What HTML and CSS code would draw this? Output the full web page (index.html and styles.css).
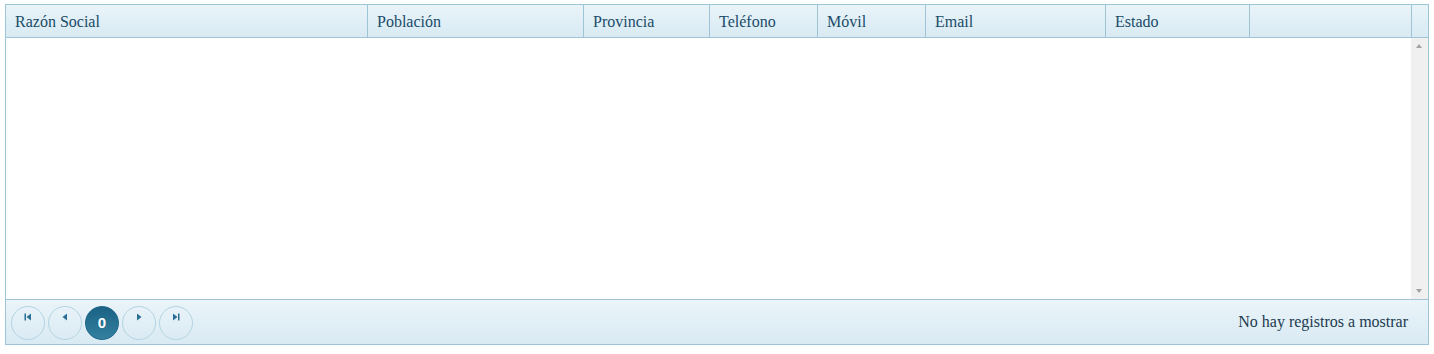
FILE: index.html
```html
<!DOCTYPE html>
<html lang="es">

<head>
    <meta charset="UTF-8">
    <meta name="viewport" content="width=device-width, initial-scale=1.0">
    <title>Clientes</title>
    <link rel="stylesheet" href="styles.css">
</head>

<body>
    <!-- Grid -->
    <div class="grid">
        <div class="grid-header">
            <div class="col col-razon">Razón Social</div>
            <div class="col col-poblacion">Población</div>
            <div class="col col-provincia">Provincia</div>
            <div class="col col-telefono">Teléfono</div>
            <div class="col col-movil">Móvil</div>
            <div class="col col-email">Email</div>
            <div class="col col-estado">Estado</div>
            <div class="col col-extra"></div>
            <div class="col col-scroll"></div>
        </div>

        <div class="grid-body">
            <div class="grid-content"></div>
            <div class="scrollbar">
                <span class="arrow arrow-up"></span>
                <span class="arrow arrow-down"></span>
            </div>
        </div>

        <!-- Pager -->
        <div class="grid-pager">
            <div class="pager-buttons">
                <button class="pager-btn" title="Primera">
                    <svg width="8" height="8" viewBox="0 0 8 8"><rect x="0.5" y="0.5" width="1.5" height="7" fill="#2a6f93"/><path d="M7 0.5 L2.5 4 L7 7.5 Z" fill="#2a6f93"/></svg>
                </button>
                <button class="pager-btn" title="Anterior">
                    <svg width="8" height="8" viewBox="0 0 8 8"><path d="M6 0.5 L1.5 4 L6 7.5 Z" fill="#2a6f93"/></svg>
                </button>
                <button class="pager-btn active">0</button>
                <button class="pager-btn" title="Siguiente">
                    <svg width="8" height="8" viewBox="0 0 8 8"><path d="M2 0.5 L6.5 4 L2 7.5 Z" fill="#2a6f93"/></svg>
                </button>
                <button class="pager-btn" title="Última">
                    <svg width="8" height="8" viewBox="0 0 8 8"><path d="M1 0.5 L5.5 4 L1 7.5 Z" fill="#2a6f93"/><rect x="6" y="0.5" width="1.5" height="7" fill="#2a6f93"/></svg>
                </button>
            </div>
            <div class="pager-info">No hay registros a mostrar</div>
        </div>
    </div>
</body>

</html>
```

FILE: styles.css
```css
/* General Styles */
body {
    margin: 0;
    padding: 4px 0 0 5px;
    font-family: "Liberation Serif", "Times New Roman", serif;
    background-color: #ffffff;
    color: #1a4b68;
}

.grid {
    width: 1424px;
    box-sizing: border-box;
    border: 1px solid #9dc5d6;
}

/* Header */
.grid-header {
    display: flex;
    height: 32px;
    border-bottom: 1px solid #9dc5d6;
    background: linear-gradient(to bottom, #e9f4f9, #d8eaf3);
}

.col {
    box-sizing: border-box;
    padding: 1px 9px 0;
    line-height: 32px;
    font-size: 16px;
    border-right: 1px solid #9dc5d6;
    white-space: nowrap;
}

.col-razon { width: 362px; }
.col-poblacion { width: 216px; }
.col-provincia { width: 126px; }
.col-telefono { width: 108px; }
.col-movil { width: 108px; }
.col-email { width: 180px; }
.col-estado { width: 144px; }
.col-extra { width: 162px; }
.col-scroll { flex: 1; border-right: none; padding: 0; }

/* Body */
.grid-body {
    display: flex;
    height: 261px;
}

.grid-content {
    flex: 1;
}

.scrollbar {
    width: 17px;
    background-color: #f0f0f0;
    position: relative;
}

.arrow {
    position: absolute;
    left: 5px;
    width: 0;
    height: 0;
    border-left: 3.5px solid transparent;
    border-right: 3.5px solid transparent;
}

.arrow-up {
    top: 6px;
    border-bottom: 4px solid #a3a3a3;
}

.arrow-down {
    bottom: 6px;
    border-top: 4px solid #a3a3a3;
}

/* Pager */
.grid-pager {
    display: flex;
    align-items: center;
    justify-content: space-between;
    height: 44px;
    border-top: 1px solid #9dc5d6;
    background: linear-gradient(to bottom, #eaf4f9, #d9eaf3);
    padding: 0 20px 0 5px;
}

.pager-buttons {
    display: flex;
    gap: 3px;
    margin-top: 1px;
}

.pager-btn {
    width: 34px;
    height: 34px;
    border-radius: 50%;
    border: 1px solid #b3d4e2;
    background: transparent;
    padding: 6px 0 0 0;
    display: flex;
    justify-content: center;
    align-items: flex-start;
    cursor: pointer;
}

.pager-btn.active {
    background: linear-gradient(to bottom, #1b6286, #33809f);
    border-color: #1d6688;
    color: #ffffff;
    font-family: "Liberation Sans", Arial, sans-serif;
    font-size: 15px;
    font-weight: bold;
    padding: 0;
    align-items: center;
}

.pager-info {
    font-size: 16px;
    color: #1b3b50;
}
```
